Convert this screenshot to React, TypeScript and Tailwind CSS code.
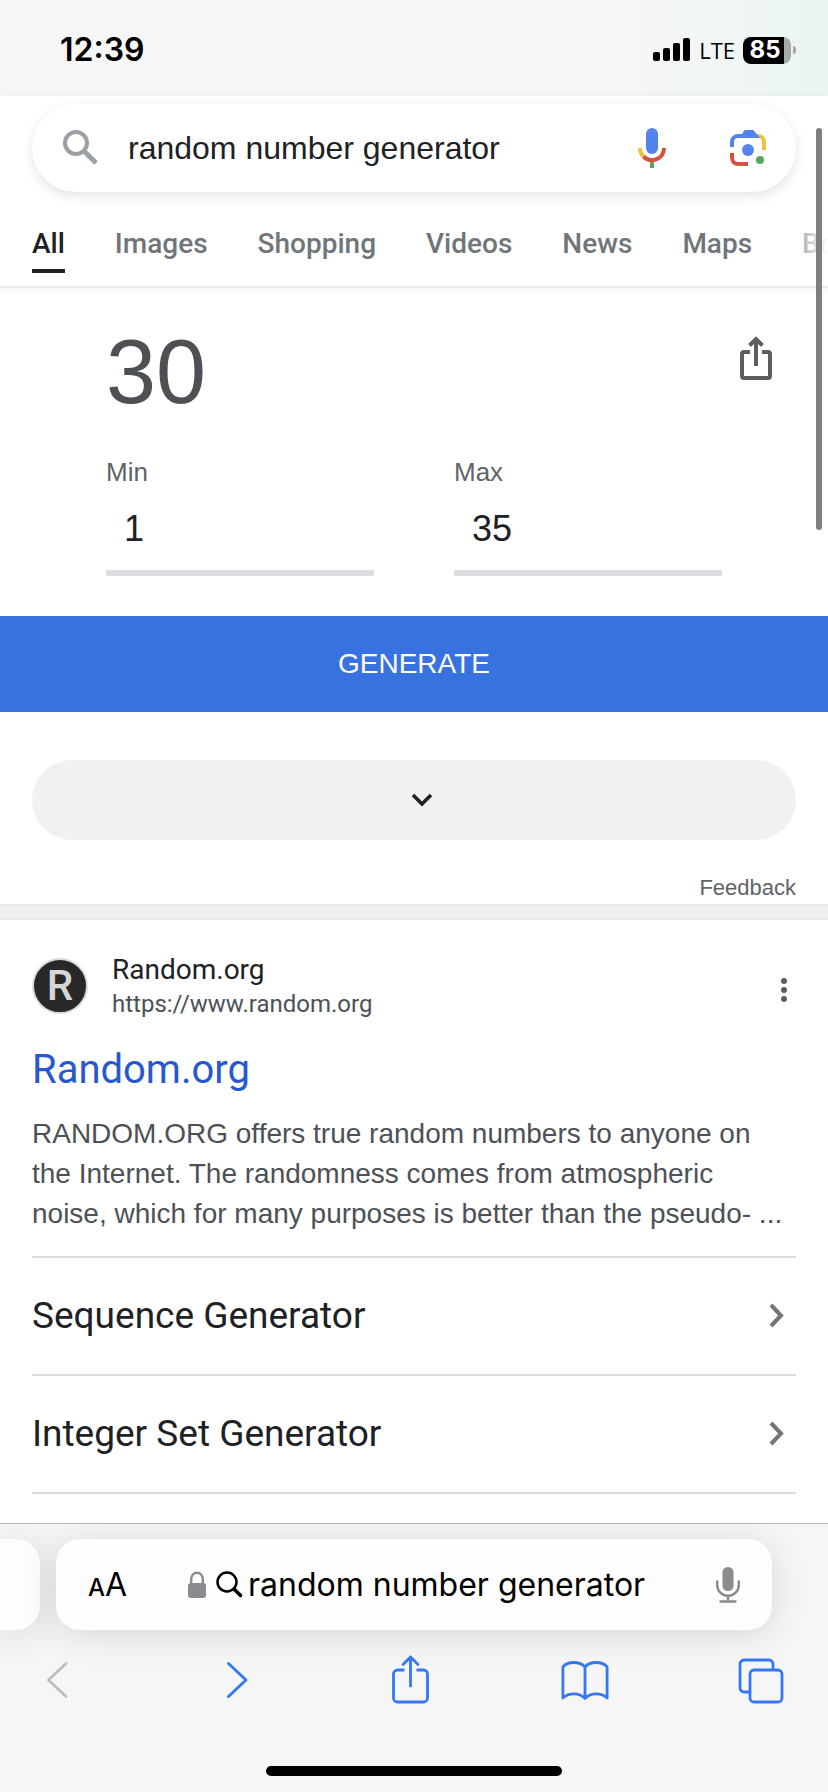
import { useState } from 'react';

const tabs = ['Images', 'Shopping', 'Videos', 'News', 'Maps', 'Books'];

const sitelinks = ['Sequence Generator', 'Integer Set Generator'];

function StatusBar() {
  return (
    <div className="flex h-24 items-center justify-between bg-linear-to-r from-[#f6f6f6] from-75% to-[#eaf4f3] pr-8 pl-[60px] font-[Inter,sans-serif] text-black">
      <time className="mt-1 text-[32px] leading-10 font-semibold">12:39</time>
      <div className="mt-1 flex items-center gap-2">
        <svg className="h-6 w-[38px]" viewBox="0 0 38 24" aria-hidden="true">
          <rect x="0" y="14" width="7" height="9" rx="2" />
          <rect x="10" y="10" width="7" height="13" rx="2" />
          <rect x="20" y="5" width="7" height="18" rx="2" />
          <rect x="30" y="0" width="7" height="23" rx="2" />
        </svg>
        <span className="font-['Open_Sans',sans-serif] text-[22px] leading-8">LTE</span>
        <div className="flex items-center gap-0.5">
          <div className="flex h-[27px] w-12 items-center justify-center rounded-lg bg-linear-to-r from-black from-85% to-[#a5abaa] to-85% pr-1 text-2xl leading-none font-bold text-white">
            85
          </div>
          <span className="h-2 w-[3px] rounded-r-full bg-[#a5abaa]" />
        </div>
      </div>
    </div>
  );
}

function GoogleMic() {
  return (
    <svg className="h-12 w-12" viewBox="0 0 48 48" fill="none" strokeWidth="4" aria-hidden="true">
      <rect x="18" y="4" width="12" height="26" rx="6" fill="#5383ec" />
      <path d="M12 24a12 12 0 0 0 3.5 8.5" stroke="#f1bf42" />
      <path d="M15.500 32.500A12 12 0 0 0 36 24" stroke="#d9503f" />
      <path d="M24 38v6" stroke="#58a55c" />
    </svg>
  );
}

function GoogleLens() {
  return (
    <svg className="h-12 w-12" viewBox="0 0 48 48" fill="none" strokeWidth="4" aria-hidden="true">
      <path d="M30 12h4a6 6 0 0 1 6 6v8" stroke="#f1bf42" />
      <path d="M8 23v-5a6 6 0 0 1 6-6h18" stroke="#5383ec" />
      <path d="M17 12 20 6.700Q20.500 6 21.500 6h7q1 0 1.700 1L36 14H17z" fill="#5383ec" />
      <path d="M8 29v5a6 6 0 0 0 6 6h10" stroke="#d9503f" />
      <circle cx="24" cy="26" r="6" fill="#5383ec" />
      <circle cx="36" cy="36" r="4" fill="#58a55c" />
    </svg>
  );
}

function SearchHeader() {
  return (
    <header className="relative bg-white pt-2 shadow-[0_2px_8px_rgba(0,0,0,0.06)]">
      <form className="mx-8 flex h-22 items-center rounded-full bg-white pr-6 pl-7 shadow-[0_4px_12px_rgba(32,33,36,0.12)]">
        <svg className="h-10 w-10 shrink-0" viewBox="0 0 40 40" fill="none" stroke="#9aa0a6" strokeWidth="4" aria-hidden="true">
          <circle cx="16" cy="15" r="11" />
          <path d="m24 23 12 12" strokeWidth="5" />
        </svg>
        <input
          className="ml-7 min-w-0 flex-1 bg-transparent text-[32px] leading-10 text-[#202124] outline-none"
          aria-label="Search"
          defaultValue="random number generator"
        />
        <button type="button" aria-label="Search by voice">
          <GoogleMic />
        </button>
        <button className="ml-12" type="button" aria-label="Search by image">
          <GoogleLens />
        </button>
      </form>
      <nav className="relative overflow-hidden border-b-2 border-[#ebebeb] font-[Roboto,sans-serif] text-[28px] leading-10 font-medium text-[#70757a]">
        <div className="flex h-[94px] items-start gap-[50px] px-8 pt-8">
          <a className="border-b-4 border-[#202124] pb-[5px] text-[#202124]" href="#all" aria-current="page">
            All
          </a>
          {tabs.map((tab) => (
            <a href={`#${tab.toLowerCase()}`} key={tab}>
              {tab}
            </a>
          ))}
        </div>
        <div className="absolute inset-y-0 right-0 w-12 bg-linear-to-r from-transparent to-white" />
      </nav>
    </header>
  );
}

type NumberFieldProps = {
  id: string;
  label: string;
  value: number;
  onChange: (value: number) => void;
};

function NumberField({ id, label, value, onChange }: NumberFieldProps) {
  return (
    <div className="flex flex-1 flex-col">
      <label className="text-[26px] leading-8 text-[#5f6368]" htmlFor={id}>
        {label}
      </label>
      <input
        className="h-22 w-full border-b-6 border-[#dadce0] px-[18px] text-4xl text-[#202124] outline-none"
        id={id}
        inputMode="numeric"
        value={value}
        onChange={(event) => onChange(Number(event.target.value) || 0)}
      />
    </div>
  );
}

function Generator() {
  const [min, setMin] = useState(1);
  const [max, setMax] = useState(35);
  const [result, setResult] = useState(30);

  const generate = () => setResult(min + Math.floor(Math.random() * (max - min + 1)));

  return (
    <section>
      <div className="flex items-start justify-between pt-9 pr-12 pl-[106px]">
        <output className="text-[90px] leading-24 text-[#4d5156]">{result}</output>
        <button className="mt-2" type="button" aria-label="Share">
          <svg className="h-12 w-12" viewBox="0 0 48 48" fill="none" stroke="#5e5e5e" strokeWidth="4" aria-hidden="true">
            <path d="M18 20h-6a2 2 0 0 0-2 2v22a2 2 0 0 0 2 2h24a2 2 0 0 0 2-2V22a2 2 0 0 0-2-2h-6" />
            <path d="M24 34V7" />
            <path d="m17.500 13.500 6.500-6.500 6.500 6.500" />
          </svg>
        </button>
      </div>
      <div className="mt-9 flex gap-20 px-[106px]">
        <NumberField id="min" label="Min" value={min} onChange={setMin} />
        <NumberField id="max" label="Max" value={max} onChange={setMax} />
      </div>
      <button className="mt-10 h-24 w-full bg-[#3871e0] text-[28px] text-white" type="button" onClick={generate}>
        GENERATE
      </button>
      <div className="px-8 pt-12">
        <button className="flex h-20 w-full items-center justify-center rounded-full bg-[#f0f1f3] pl-4" type="button" aria-label="Show more">
          <svg className="h-8 w-8" viewBox="0 0 32 32" fill="none" stroke="#202124" strokeWidth="3.500" aria-hidden="true">
            <path d="m7 11 9 9 9-9" />
          </svg>
        </button>
        <div className="mt-8 flex justify-end text-[22px] leading-8 text-[#5f6368]">
          <a href="#feedback">Feedback</a>
        </div>
      </div>
    </section>
  );
}

function Result() {
  return (
    <article className="px-8 pt-8">
      <div className="flex items-center">
        <div className="flex h-14 w-14 items-center justify-center rounded-full border-2 border-[#d8dadf] bg-[#282828] font-[Roboto,sans-serif] text-[42px] leading-none font-medium text-[#d6d6d6]">
          R
        </div>
        <div className="ml-6 flex-1 font-[Roboto,sans-serif]">
          <div className="text-[28px] leading-9 text-[#202124]">Random.org</div>
          <div className="text-2xl leading-8 text-[#4d5156]">https://www.random.org</div>
        </div>
        <button type="button" aria-label="About this result">
          <svg className="h-10 w-6" viewBox="0 0 24 40" fill="#5e5e5e" aria-hidden="true">
            <circle cx="12" cy="15" r="3" />
            <circle cx="12" cy="24" r="3" />
            <circle cx="12" cy="33" r="3" />
          </svg>
        </button>
      </div>
      <h3 className="mt-[26px] font-[Roboto,sans-serif] text-[40px] leading-12 text-[#2858cf]">
        <a href="https://www.random.org">Random.org</a>
      </h3>
      <p className="mt-5 pr-1 text-[28px] leading-10 text-[#4d5156]">
        RANDOM.ORG offers true random numbers to anyone on the Internet. The randomness comes from atmospheric noise,
        which for many purposes is better than the pseudo- ...
      </p>
      <ul className="mt-[22px] border-b-2 border-[#dadce0] font-[Roboto,sans-serif] text-[37px] text-[#202124]">
        {sitelinks.map((title) => (
          <li className="border-t-2 border-[#dadce0]" key={title}>
            <a className="flex h-[116px] items-center justify-between pr-1" href="https://www.random.org">
              {title}
              <svg className="h-8 w-8" viewBox="0 0 32 32" fill="none" stroke="#70757a" strokeWidth="4" aria-hidden="true">
                <path d="m11 5 10 10.500L11 26" />
              </svg>
            </a>
          </li>
        ))}
      </ul>
    </article>
  );
}

function AddressBar() {
  return (
    <div className="flex gap-4 pt-[15px] pr-14">
      <div className="h-[91px] w-10 shrink-0 rounded-r-3xl bg-[#fdfdfd] shadow-[0_4px_36px_rgba(0,0,0,0.13)]" />
      <form className="flex h-[91px] min-w-0 flex-1 items-center rounded-3xl bg-[#fdfdfd] px-8 shadow-[0_4px_36px_rgba(0,0,0,0.13)]">
        <button className="flex items-baseline" type="button" aria-label="Page settings">
          <span className="text-2xl font-medium">A</span>
          <span className="text-[32px] leading-10">A</span>
        </button>
        <svg className="ml-auto h-7 w-[18px] shrink-0" viewBox="0 0 18 28" aria-hidden="true">
          <path d="M3.200 13V8a5.800 6.300 0 0 1 11.600 0v5" fill="none" stroke="#8a8a8f" strokeWidth="2.400" />
          <rect x="0" y="12" width="18" height="15" rx="3" fill="#8a8a8f" />
        </svg>
        <svg className="ml-2.5 h-7 w-7 shrink-0" viewBox="0 0 28 28" fill="none" stroke="#000" aria-hidden="true">
          <circle cx="11" cy="11" r="9.500" strokeWidth="2.500" />
          <path d="m18 18 6.500 6.500" strokeWidth="3.500" strokeLinecap="round" />
        </svg>
        <input
          className="ml-1 w-[468px] min-w-0 bg-transparent text-[32px] leading-10 text-black outline-none"
          aria-label="Address"
          defaultValue="random number generator"
        />
        <button type="button" aria-label="Dictate">
          <svg className="h-9 w-6" viewBox="0 0 24 36" fill="none" stroke="#8a8a8f" strokeWidth="2.400" strokeLinecap="round" aria-hidden="true">
            <rect x="6.500" y="0" width="11" height="24" rx="5.500" fill="#8a8a8f" stroke="none" />
            <path d="M1.200 14.500V18a10.800 10.800 0 0 0 21.600 0v-3.500M12 29v5.500M4.500 34.500h15" />
          </svg>
        </button>
      </form>
    </div>
  );
}

function BrowserBar() {
  return (
    <footer className="sticky bottom-0 mt-auto overflow-hidden border-t border-[#b8b8b8] bg-[#f6f6f6] font-[Inter,sans-serif] text-black">
      <AddressBar />
      <div className="mt-[27px] flex justify-between pr-[43px] pl-[33px] text-[#3478f6]">
        <button className="text-[#bfbfbf]" type="button" aria-label="Back" disabled>
          <svg className="h-12 w-12" viewBox="0 0 48 48" fill="none" stroke="currentColor" strokeWidth="3" strokeLinecap="round" strokeLinejoin="round" aria-hidden="true">
            <path d="M33 6.500 15.500 23 33 39.500" />
          </svg>
        </button>
        <button type="button" aria-label="Forward">
          <svg className="h-12 w-12" viewBox="0 0 48 48" fill="none" stroke="currentColor" strokeWidth="3" strokeLinecap="round" strokeLinejoin="round" aria-hidden="true">
            <path d="M19.500 6.500 37 23 19.500 39.500" />
          </svg>
        </button>
        <button type="button" aria-label="Share page">
          <svg className="h-12 w-12 overflow-visible" viewBox="0 0 48 48" fill="none" stroke="currentColor" strokeWidth="2.800" strokeLinejoin="round" aria-hidden="true">
            <path d="M19.500 13h-7a4 4 0 0 0-4 4v24a4 4 0 0 0 4 4h26a4 4 0 0 0 4-4V17a4 4 0 0 0-4-4h-7" />
            <path d="M25.500 29V0M18 7.500 25.500 0 33 7.500" strokeLinecap="round" />
          </svg>
        </button>
        <button type="button" aria-label="Bookmarks">
          <svg className="h-12 w-12" viewBox="0 0 48 48" fill="none" stroke="currentColor" strokeWidth="2.800" strokeLinejoin="round" aria-hidden="true">
            <path d="M24 10C19 4 6.500 4 1.900 10V41C8 35.500 18 35.500 24 41.500 30 35.500 40 35.500 46.100 41V10C41.500 4 29 4 24 10zV41" />
          </svg>
        </button>
        <button type="button" aria-label="Tabs">
          <svg className="h-12 w-12" viewBox="0 0 48 48" fill="none" stroke="currentColor" strokeWidth="2.800" aria-hidden="true">
            <path d="M12 35H7a4 4 0 0 1-4-4V7a4 4 0 0 1 4-4h25a4 4 0 0 1 4 4v5" />
            <rect x="13" y="13" width="32" height="32" rx="4" />
          </svg>
        </button>
      </div>
      <div className="mx-auto mt-[61px] mb-4 h-2.5 w-[296px] rounded-full bg-black" />
    </footer>
  );
}

export default function App() {
  return (
    <div className="relative flex min-h-screen flex-col bg-white font-['Liberation_Sans',Arial,sans-serif]">
      <StatusBar />
      <SearchHeader />
      <main>
        <Generator />
        <div className="h-4 border-y-2 border-[#ebebeb] bg-[#f0f1f3]" />
        <Result />
      </main>
      <BrowserBar />
      {/* page scroll indicator */}
      <div className="absolute top-32 right-1.5 h-[402px] w-1.5 rounded-full bg-[#7f7f7f]" />
    </div>
  );
}
